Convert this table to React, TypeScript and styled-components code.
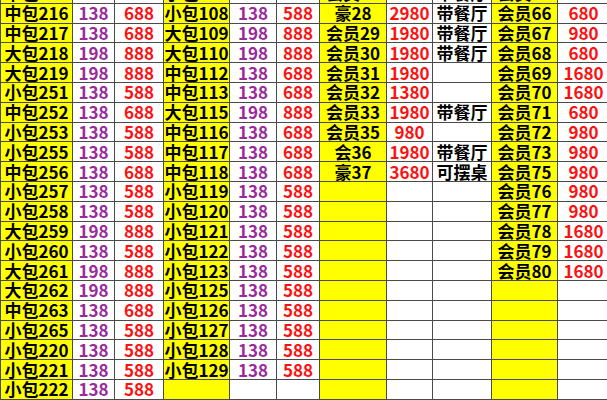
import styled, { createGlobalStyle } from "styled-components";

const GlobalStyle = createGlobalStyle`
  html, body {
    margin: 0;
    padding: 0;
    background: #ffffff;
  }
`;

type Tone = "yellow" | "white";
type Ink = "black" | "purple" | "red";

const inks: Record<Ink, string> = {
  black: "#000000",
  purple: "#9a2a9a",
  red: "#ff1010",
};

const Sheet = styled.div`
  width: 607px;
  height: 400px;
  overflow: hidden;
  background: #ffffff;
`;

const Grid = styled.table`
  width: 609px;
  margin-top: -17px;
  border-collapse: collapse;
  table-layout: fixed;
  font-family: "Noto Sans CJK SC", "Liberation Sans", sans-serif;
  font-size: 17px;
`;

const Row = styled.tr`
  height: 19.8px;
`;

const Cell = styled.td<{ $tone: Tone; $ink: Ink }>`
  height: 18.8px;
  padding: 0;
  border: 1px solid #4a4a4a;
  background: ${(p) => (p.$tone === "yellow" ? "#ffff00" : "#ffffff")};
  color: ${(p) => inks[p.$ink]};
  font-weight: ${(p) => (p.$ink === "black" ? 700 : 600)};
  line-height: 18px;
  text-align: center;
  vertical-align: middle;
  white-space: nowrap;
  overflow: hidden;
`;

const widths = [72, 42, 49, 66, 47, 43, 67, 46, 59, 66, 52];

const tones: Tone[] = [
  "yellow", "white", "white",
  "yellow", "white", "white",
  "yellow", "white", "white",
  "yellow", "white",
];

const inkOf: Ink[] = [
  "black", "purple", "red",
  "black", "purple", "red",
  "black", "red", "black",
  "black", "red",
];

// each row: left room, price, price | right room, price, price | member, price, note | vip, price
const rows: string[][] = [
  ["中包215", "138", "688", "小包107", "138", "588", "会员27", "1980", "带餐厅", "会员65", "980"],
  ["中包216", "138", "688", "小包108", "138", "588", "豪28", "2980", "带餐厅", "会员66", "680"],
  ["中包217", "138", "688", "大包109", "198", "888", "会员29", "1980", "带餐厅", "会员67", "980"],
  ["大包218", "198", "888", "大包110", "198", "888", "会员30", "1980", "带餐厅", "会员68", "680"],
  ["大包219", "198", "888", "中包112", "138", "688", "会员31", "1980", "", "会员69", "1680"],
  ["小包251", "138", "588", "中包113", "138", "688", "会员32", "1380", "", "会员70", "1680"],
  ["中包252", "138", "688", "大包115", "198", "888", "会员33", "1980", "带餐厅", "会员71", "680"],
  ["小包253", "138", "588", "中包116", "138", "688", "会员35", "980", "", "会员72", "980"],
  ["小包255", "138", "588", "中包117", "138", "688", "会36", "1980", "带餐厅", "会员73", "980"],
  ["中包256", "138", "688", "中包118", "138", "688", "豪37", "3680", "可摆桌", "会员75", "980"],
  ["小包257", "138", "588", "小包119", "138", "588", "", "", "", "会员76", "980"],
  ["小包258", "138", "588", "小包120", "138", "588", "", "", "", "会员77", "980"],
  ["大包259", "198", "888", "小包121", "138", "588", "", "", "", "会员78", "1680"],
  ["小包260", "138", "588", "小包122", "138", "588", "", "", "", "会员79", "1680"],
  ["大包261", "198", "888", "小包123", "138", "588", "", "", "", "会员80", "1680"],
  ["大包262", "198", "888", "小包125", "138", "588", "", "", "", "", ""],
  ["中包263", "138", "688", "小包126", "138", "588", "", "", "", "", ""],
  ["小包265", "138", "588", "小包127", "138", "588", "", "", "", "", ""],
  ["小包220", "138", "588", "小包128", "138", "588", "", "", "", "", ""],
  ["小包221", "138", "588", "小包129", "138", "588", "", "", "", "", ""],
  ["小包222", "138", "588", "", "", "", "", "", "", "", ""],
  ["小包223", "138", "588", "", "", "", "", "", "", "", ""],
];

export default function App() {
  return (
    <>
      <GlobalStyle />
      <Sheet>
        <Grid>
          <colgroup>
            {widths.map((w, i) => (
              <col key={i} style={{ width: w }} />
            ))}
          </colgroup>
          <tbody>
            {rows.map((row, r) => (
              <Row key={r}>
                {row.map((text, c) => (
                  <Cell key={c} $tone={tones[c]} $ink={inkOf[c]}>
                    {text}
                  </Cell>
                ))}
              </Row>
            ))}
          </tbody>
        </Grid>
      </Sheet>
    </>
  );
}
